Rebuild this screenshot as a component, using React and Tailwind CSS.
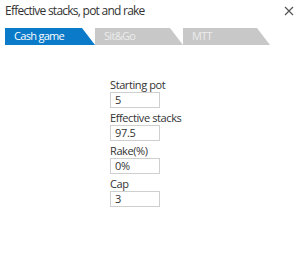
import React from 'react';

const tabs = [
  { label: 'Cash game', w: 'w-[90px]', active: true },
  { label: 'Sit&Go', w: 'w-[88px]', active: false },
  { label: 'MTT', w: 'w-[87px]', active: false },
];

const fields = [
  { label: 'Starting pot', value: '5' },
  { label: 'Effective stacks', value: '97.5' },
  { label: 'Rake(%)', value: '0%' },
  { label: 'Cap', value: '3' },
];

export default function App() {
  return (
    <div className="w-[300px] h-[263px] bg-white font-['Open_Sans',sans-serif] text-[#333]">
      <div className="flex items-center justify-between h-[22px] pl-[5px] pr-[5px]">
        <span className="text-[12px] tracking-[-0.75px] text-[#333]">Effective stacks, pot and rake</span>
        <svg width="10" height="10" viewBox="0 0 10 10" className="mr-[1px]">
          <path d="M1 1 L9 9 M9 1 L1 9" stroke="#555" strokeWidth="1.2" />
        </svg>
      </div>

      <div className="flex mt-[6px] ml-[5px] h-[17px]">
        {tabs.map((t, i) => (
          <div
            key={i}
            className={`${t.w} h-full flex items-center pl-[9px] text-[11px] tracking-[-0.7px] [clip-path:polygon(0_0,calc(100%-13px)_0,100%_100%,0_100%)] ${
              t.active ? 'bg-[#0a7ac9] text-white' : 'bg-[#c8c8c8] text-[#ececec]'
            }`}
          >
            {t.label}
          </div>
        ))}
      </div>

      <div className="flex flex-col gap-[2px] ml-[110px] mt-[32px]">
        {fields.map((f, i) => (
          <div key={i} className="flex flex-col">
            <span className="text-[11px] leading-[15px] tracking-[-0.4px]">{f.label}</span>
            <div className="w-[50px] h-[16px] border border-[#cfcfcf] flex items-center pl-[4px] text-[11px] tracking-[-0.3px]">
              {f.value}
            </div>
          </div>
        ))}
      </div>
    </div>
  );
}
